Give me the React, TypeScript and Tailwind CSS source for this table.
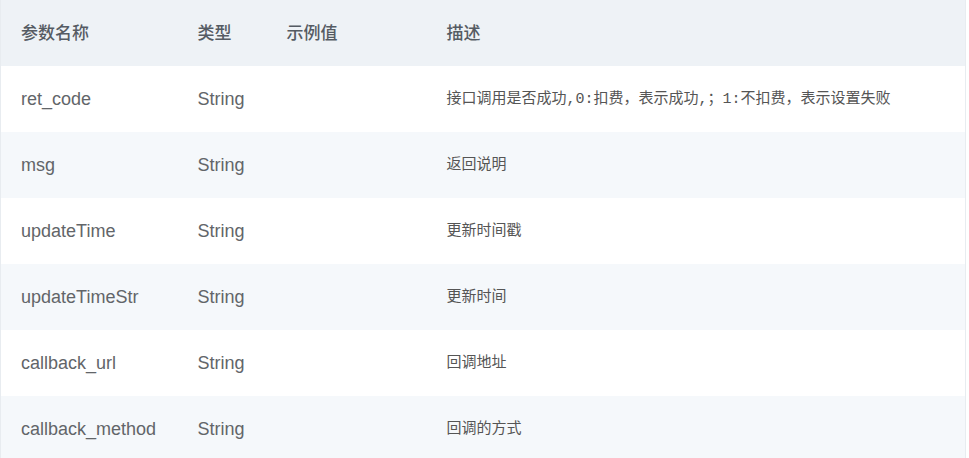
const rows = [
  { name: "ret_code", type: "String", example: "", desc: "接口调用是否成功,0:扣费，表示成功,；1:不扣费，表示设置失败" },
  { name: "msg", type: "String", example: "", desc: "返回说明" },
  { name: "updateTime", type: "String", example: "", desc: "更新时间戳" },
  { name: "updateTimeStr", type: "String", example: "", desc: "更新时间" },
  { name: "callback_url", type: "String", example: "", desc: "回调地址" },
  { name: "callback_method", type: "String", example: "", desc: "回调的方式" },
];

export default function App() {
  return (
    <div className="w-[969px] h-[458px] overflow-hidden bg-white">
      <table className="w-[966px] table-fixed border-collapse border-x border-[#e8ecf0]">
        <colgroup>
          <col className="w-[177px]" />
          <col className="w-[89px]" />
          <col className="w-[160px]" />
          <col />
        </colgroup>
        <thead>
          <tr className="h-[66px] bg-[#eef2f6] text-left text-[17px] text-[#555b63] font-['Noto_Sans_CJK_SC',sans-serif]">
            <th className="pl-5 pb-[2px] font-medium">参数名称</th>
            <th className="pl-5 pb-[2px] font-medium">类型</th>
            <th className="pl-5 pb-[2px] font-medium">示例值</th>
            <th className="pl-5 pb-[2px] font-medium">描述</th>
          </tr>
        </thead>
        <tbody>
          {rows.map((r, i) => (
            <tr
              key={r.name}
              className={`h-[66px] ${i % 2 === 0 ? "bg-white" : "bg-[#f5f8fb]"}`}
            >
              <td className="pl-5 text-[18px] text-[#626569] font-['Liberation_Sans',sans-serif]">{r.name}</td>
              <td className="pl-5 text-[18px] text-[#626569] font-['Liberation_Sans',sans-serif]">{r.type}</td>
              <td className="pl-5 text-[18px] text-[#626569]">{r.example}</td>
              <td className="pl-5 pt-[3px] text-[15px] text-[#555] font-['Liberation_Mono','Noto_Sans_CJK_SC',monospace]">{r.desc}</td>
            </tr>
          ))}
        </tbody>
      </table>
    </div>
  );
}
